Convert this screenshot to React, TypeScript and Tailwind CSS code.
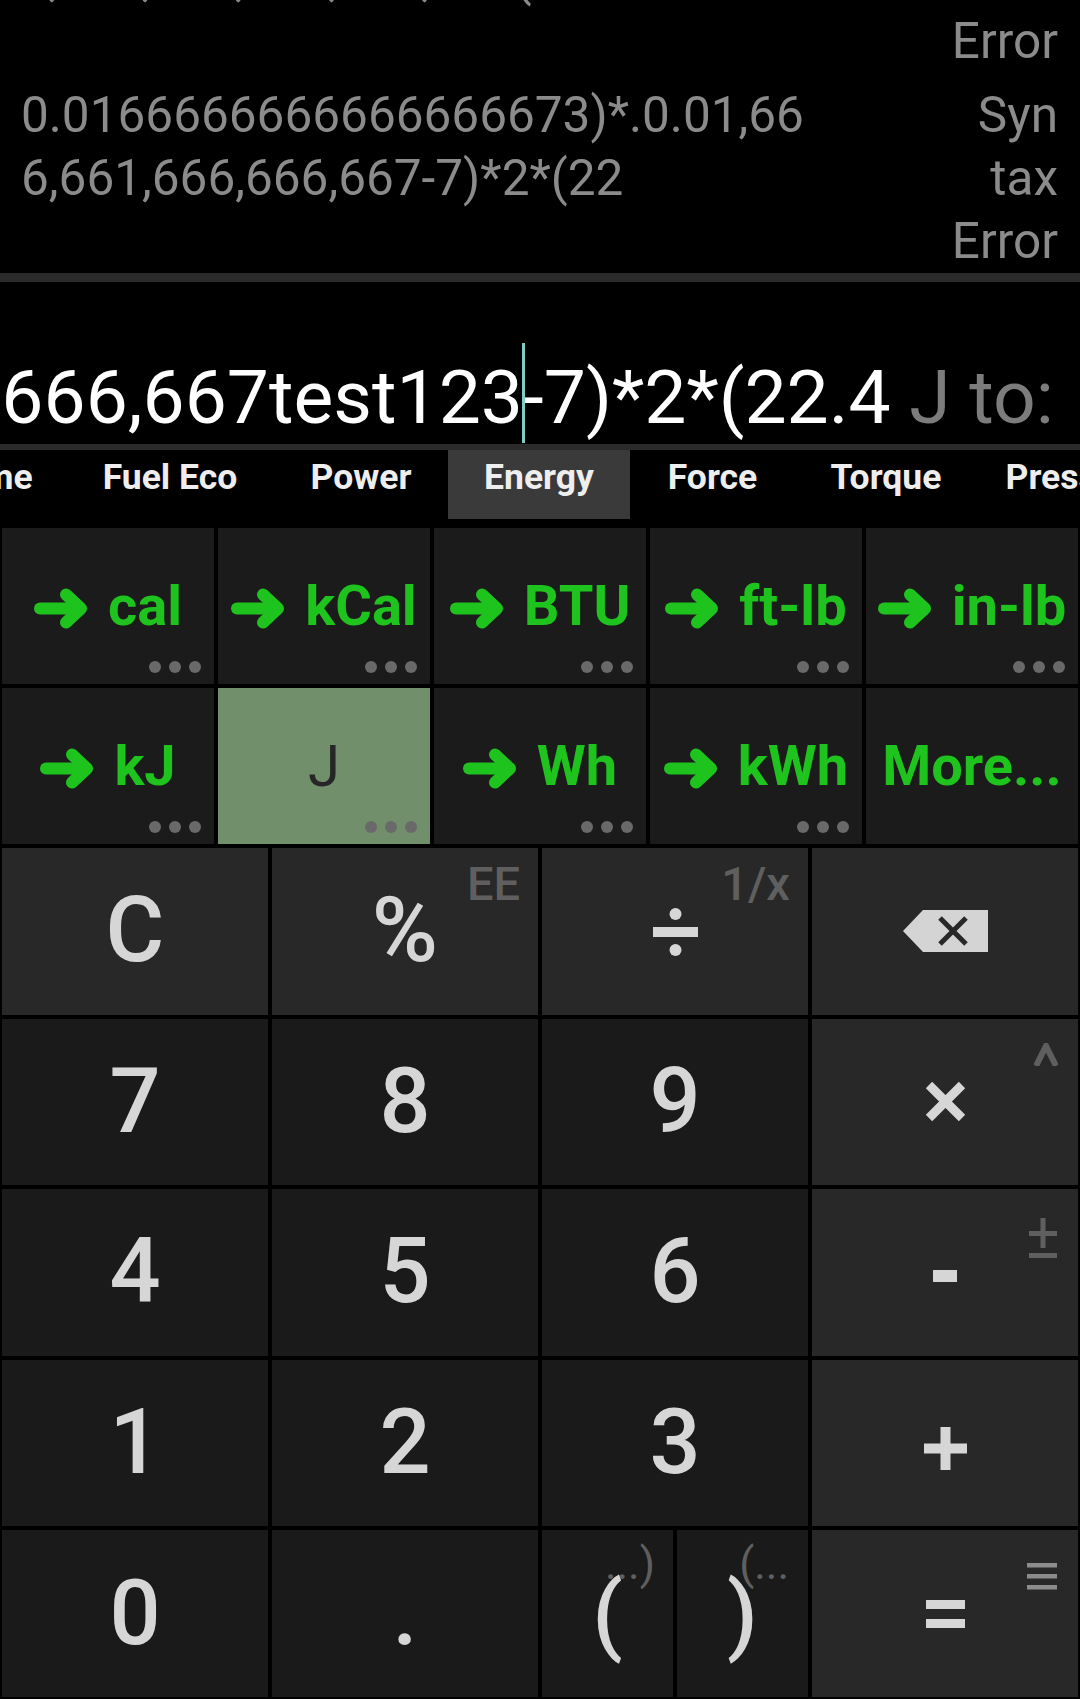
import React from 'react';

function Arrow() {
  return (
    <svg width="54" height="41" viewBox="0 0 54 41" className="shrink-0 mt-[4px]">
      <g fill="none" stroke="#1ec31e" strokeWidth="12" strokeLinecap="round" strokeLinejoin="round">
        <path d="M6 20.5H44" />
        <path d="M32 6.5L47 20.5L32 34.5" />
      </g>
    </svg>
  );
}

function Dots() {
  return (
    <div className="absolute right-[13px] bottom-[11px] flex gap-[8px]">
      <span className="w-[12px] h-[12px] rounded-full bg-[#696969]" />
      <span className="w-[12px] h-[12px] rounded-full bg-[#696969]" />
      <span className="w-[12px] h-[12px] rounded-full bg-[#696969]" />
    </div>
  );
}

const units = [
  { label: 'cal', arrow: true },
  { label: 'kCal', arrow: true },
  { label: 'BTU', arrow: true },
  { label: 'ft-lb', arrow: true },
  { label: 'in-lb', arrow: true },
  { label: 'kJ', arrow: true },
  { label: 'J', selected: true },
  { label: 'Wh', arrow: true },
  { label: 'kWh', arrow: true },
  { label: 'More...', more: true },
];

const tabs = [
  { label: 'Time', w: 'w-[148px] ml-[-82px]' },
  { label: 'Fuel Eco', w: 'w-[208px]' },
  { label: 'Power', w: 'w-[174px]' },
  { label: 'Energy', w: 'w-[182px]', active: true },
  { label: 'Force', w: 'w-[165px]' },
  { label: 'Torque', w: 'w-[182px]' },
  { label: 'Pressure', w: 'w-[200px]' },
];

function HistoryItem({ lines, result }: { lines: string[]; result: string[] }) {
  return (
    <div className="flex justify-between pt-[11px] text-[49.5px] leading-[63px] text-[#8b8b8b]">
      <div className="pl-[21px] whitespace-nowrap">
        {lines.map((l, i) => (
          <div key={i}>{l}</div>
        ))}
      </div>
      <div className="pr-[22px] text-right">
        {result.map((r, i) => (
          <div key={i}>{r}</div>
        ))}
      </div>
    </div>
  );
}

function Sup({ children }: { children: React.ReactNode }) {
  return (
    <span className="absolute top-[12px] right-[18px] text-[47px] leading-none font-medium text-[#5f5f5f]">
      {children}
    </span>
  );
}

function Key({ dark, sup, children }: { dark?: boolean; sup?: React.ReactNode; children: React.ReactNode }) {
  return (
    <div className={`relative flex items-center justify-center ${dark ? 'bg-[#1a1a1a]' : 'bg-[#282828]'}`}>
      {sup}
      <span className="relative text-[90px] leading-none font-medium text-[#d6d6d6]">{children}</span>
    </div>
  );
}

function IconBox({ dark, sup, children }: { dark?: boolean; sup?: React.ReactNode; children: React.ReactNode }) {
  return (
    <div className={`relative flex items-center justify-center ${dark ? 'bg-[#1a1a1a]' : 'bg-[#282828]'}`}>
      {sup}
      {children}
    </div>
  );
}

export default function App() {
  return (
    <div className="w-[1080px] h-[1699px] bg-black flex flex-col overflow-hidden font-[Roboto,sans-serif]">
      {/* history */}
      <div className="h-[273px] shrink-0 overflow-hidden flex flex-col justify-end">
        <HistoryItem
          lines={['0.0166666666666666673)*.0.01,66', '1,666,666,666,667,666(22']}
          result={['Syn', 'tax', 'Error']}
        />
        <div className="h-[3px] bg-[#2a2a2a]" />
        <HistoryItem
          lines={['0.0166666666666666673)*.0.01,66', '6,661,666,666,667-7)*2*(22']}
          result={['Syn', 'tax', 'Error']}
        />
      </div>
      <div className="h-[9px] shrink-0 bg-[#2a2a2a]" />

      {/* input */}
      <div className="h-[162px] shrink-0 flex items-end justify-end overflow-hidden pr-[26px] pb-[9px]">
        <div className="whitespace-nowrap text-[75px] leading-none text-white">
          1,666,666,666,667test123
          <span className="relative inline-block w-0 h-0">
            <span className="absolute left-[-1px] bottom-[-20px] w-[3px] h-[100px] bg-[#7fcdc5]" />
          </span>
          -7)*2*(22.4<span className="text-[#7c7c7c]"> J to:</span>
        </div>
      </div>
      <div className="h-[6px] shrink-0 bg-[#2b2b2b]" />

      {/* tabs */}
      <div className="h-[76px] shrink-0 flex overflow-hidden">
        {tabs.map((t) => (
          <div
            key={t.label}
            className={`${t.w} shrink-0 h-[69px] pt-[10px] flex justify-center text-[35.5px] leading-none font-bold text-[#eeeeee] ${t.active ? 'bg-[#3a3a3a]' : ''}`}
          >
            <span className="whitespace-nowrap">{t.label}</span>
          </div>
        ))}
      </div>

      {/* converter */}
      <div className="shrink-0 p-[2px] grid grid-cols-5 grid-rows-[156px_156px] gap-[4px]">
        {units.map((u) => (
          <div
            key={u.label}
            className={`relative flex items-center justify-center ${u.selected ? 'bg-[#728f6c]' : 'bg-[#1b1b1b]'}`}
          >
            {u.arrow && <Arrow />}
            <span
              className={`text-[56px] leading-none whitespace-nowrap ${u.arrow ? 'ml-[20px]' : ''} ${u.selected ? 'font-normal text-[#262626] text-[58px]' : 'font-bold text-[#1ec31e]'}`}
            >
              {u.label}
            </span>
            {!u.more && <Dots />}
          </div>
        ))}
      </div>

      {/* keypad */}
      <div className="flex-1 p-[2px] grid grid-cols-4 grid-rows-5 gap-[4px]">
        <Key>C</Key>
        <Key sup={<Sup>EE</Sup>}>%</Key>
        <IconBox sup={<Sup>1/x</Sup>}>
          <svg width="45" height="49" viewBox="0 0 45 49">
            <circle cx="22.5" cy="7" r="6" fill="#d6d6d6" />
            <rect x="0" y="20" width="45" height="10" fill="#d6d6d6" />
            <circle cx="22.5" cy="43" r="6" fill="#d6d6d6" />
          </svg>
        </IconBox>
        <IconBox>
          <svg width="85" height="42" viewBox="0 0 85 42">
            <path d="M0 21L20 0H85V42H20Z" fill="#d4d4d4" />
            <path d="M37 8L63 34M63 8L37 34" stroke="#282828" strokeWidth="5" />
          </svg>
        </IconBox>

        <Key dark>7</Key>
        <Key dark>8</Key>
        <Key dark>9</Key>
        <IconBox
          sup={
            <svg width="24" height="23" viewBox="0 0 24 23" className="absolute top-[24px] right-[20px]">
              <path d="M2 23L12 3L22 23" fill="none" stroke="#5f5f5f" strokeWidth="6" />
            </svg>
          }
        >
          <svg width="41" height="41" viewBox="0 0 41 41">
            <path d="M4 4L37 37M37 4L4 37" stroke="#d6d6d6" strokeWidth="9" />
          </svg>
        </IconBox>

        <Key dark>4</Key>
        <Key dark>5</Key>
        <Key dark>6</Key>
        <IconBox
          sup={
            <svg width="28" height="40" viewBox="0 0 28 40" className="absolute top-[29px] right-[21px]">
              <rect x="11.5" y="0" width="5" height="30" fill="#5f5f5f" />
              <rect x="0" y="13" width="28" height="5" fill="#5f5f5f" />
              <rect x="0" y="35" width="28" height="5" fill="#5f5f5f" />
            </svg>
          }
        >
          <svg width="24" height="12" viewBox="0 0 24 12" className="mt-[8px]">
            <rect width="24" height="12" fill="#d6d6d6" />
          </svg>
        </IconBox>

        <Key dark>1</Key>
        <Key dark>2</Key>
        <Key dark>3</Key>
        <IconBox>
          <svg width="43" height="43" viewBox="0 0 43 43" className="mt-[10px]">
            <rect x="0" y="16.5" width="43" height="10" fill="#d6d6d6" />
            <rect x="16.5" y="0" width="10" height="43" fill="#d6d6d6" />
          </svg>
        </IconBox>

        <Key dark>0</Key>
        <Key dark>.</Key>
        <div className="grid grid-cols-2 gap-[4px]">
          <div className="relative flex items-center justify-center bg-[#1a1a1a]">
            <span className="absolute top-[12px] right-[18px] text-[44px] leading-none text-[#5f5f5f]">...)</span>
            <span className="relative text-[88px] leading-none font-medium text-[#d6d6d6]">(</span>
          </div>
          <div className="relative flex items-center justify-center bg-[#1a1a1a]">
            <span className="absolute top-[12px] right-[19px] text-[44px] leading-none text-[#5f5f5f]">(...</span>
            <span className="relative text-[88px] leading-none font-medium text-[#d6d6d6]">)</span>
          </div>
        </div>
        <IconBox
          sup={
            <svg width="30" height="27" viewBox="0 0 30 27" className="absolute top-[33px] right-[21px]">
              <rect y="0" width="30" height="4.5" fill="#8c8c8c" />
              <rect y="11" width="30" height="4.5" fill="#8c8c8c" />
              <rect y="22" width="30" height="4.5" fill="#8c8c8c" />
            </svg>
          }
        >
          <svg width="39" height="28" viewBox="0 0 39 28">
            <rect y="0" width="39" height="9" fill="#d6d6d6" />
            <rect y="19" width="39" height="9" fill="#d6d6d6" />
          </svg>
        </IconBox>
      </div>
    </div>
  );
}
